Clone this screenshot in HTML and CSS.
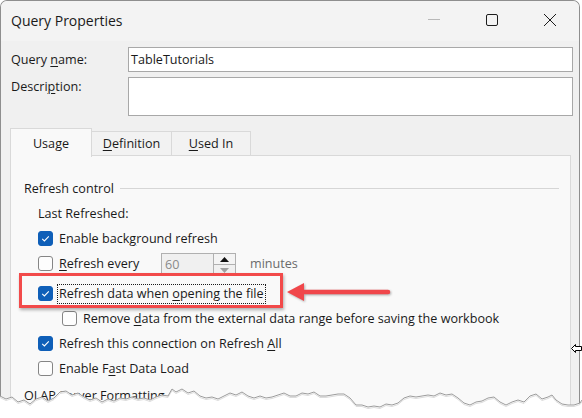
FILE: index.html
```html
<!DOCTYPE html>
<html>
<head>
<meta charset="utf-8">
<title>Query Properties</title>
<link rel="stylesheet" href="styles.css">
</head>
<body>
<div class="stage">
  <div class="window">
    <div class="titlebar">
      <span class="title">Query Properties</span>
      <div class="caption">
        <span class="cbtn"><svg width="14" height="14" viewBox="0 0 14 14"><path d="M1 6.5H13" stroke="#b8b8b8" stroke-width="1" fill="none"/></svg></span>
        <span class="cbtn"><svg width="14" height="14" viewBox="0 0 14 14"><rect x="1.5" y="1.5" width="11" height="11" rx="1.5" fill="none" stroke="#1c1c1c" stroke-width="1"/></svg></span>
        <span class="cbtn"><svg width="14" height="14" viewBox="0 0 14 14"><path d="M1 1L13 13M13 1L1 13" stroke="#1c1c1c" stroke-width="1" fill="none"/></svg></span>
      </div>
    </div>
    <div class="content">
      <div class="field name">
        <div class="label">Query <u>n</u>ame:</div>
        <div class="input">TableTutorials</div>
      </div>
      <div class="field desc">
        <div class="label">Descri<u>p</u>tion:</div>
        <div class="textarea"></div>
      </div>
      <div class="tabs">
        <div class="tab active">Usa<u>g</u>e</div>
        <div class="tab off def"><u>D</u>efinition</div>
        <div class="tab off used"><u>U</u>sed In</div>
      </div>
      <div class="panel">
        <div class="hdr"><span>Refresh control</span><span class="rule"></span></div>
        <div class="row last"><span>Last Refreshed:</span></div>
        <div class="row">
          <span class="cb on"><svg width="13" height="13" viewBox="0 0 13 13"><path d="M3.2 6.8L5.4 8.9L9.8 4.3" stroke="#fff" stroke-width="1.1" fill="none"/></svg></span>
          <span class="lbl">Enable back<u>g</u>round refresh</span>
        </div>
        <div class="row">
          <span class="cb"></span>
          <span class="lbl fixed"><u>R</u>efresh every</span>
          <div class="spinner">
            <span class="spin-val">60</span>
            <span class="spin-btns">
              <span class="sb up"><svg width="9" height="5" viewBox="0 0 9 5"><polygon points="0,5 4.5,0 9,5" fill="#111"/></svg></span>
              <span class="sb down"><svg width="9" height="5" viewBox="0 0 9 5"><polygon points="0,0 4.5,5 9,0" fill="#a0a0a0"/></svg></span>
            </span>
          </div>
          <span class="minutes">minutes</span>
        </div>
        <div class="row gapped">
          <span class="cb on"><svg width="13" height="13" viewBox="0 0 13 13"><path d="M3.2 6.8L5.4 8.9L9.8 4.3" stroke="#fff" stroke-width="1.1" fill="none"/></svg></span>
          <span class="lbl focus">Refresh data when <u>o</u>pening the file</span>
        </div>
        <div class="row sub">
          <span class="cb"></span>
          <span class="lbl wide">Remove <u>d</u>ata from the external data range before saving the workbook</span>
        </div>
        <div class="row">
          <span class="cb on"><svg width="13" height="13" viewBox="0 0 13 13"><path d="M3.2 6.8L5.4 8.9L9.8 4.3" stroke="#fff" stroke-width="1.1" fill="none"/></svg></span>
          <span class="lbl">Refresh this connection on Refresh <u>A</u>ll</span>
        </div>
        <div class="row">
          <span class="cb"></span>
          <span class="lbl">Enable F<u>a</u>st Data Load</span>
        </div>
        <div class="olap">OLAP Server Formatting</div>
      </div>
    </div>
  </div>

  <div class="callout"></div>
  <svg class="arrow" width="112" height="24" viewBox="0 0 112 24">
    <g fill="#f0474b">
      <polygon points="4,12 21,3 21,21"/>
      <path d="M19 12H105" stroke="#f0474b" stroke-width="4.5" stroke-linecap="round"/>
    </g>
  </svg>

  <svg class="cursor" width="11" height="11" viewBox="0 0 11 11">
    <path d="M0.5 5.5L4.5 1.5V3.5H10.5V7.5H4.5V9.5Z" fill="#fff" stroke="#000" stroke-width="1"/>
  </svg>

  <svg class="torn" width="582" height="418" viewBox="0 0 582 418">
    <polygon fill="#ffffff" points="0,396 6,399 12,397 18,402 24,400 30,404 36,399 42,397 48,401 54,398 60,392 66,391 72,395 78,393 84,397 90,400 96,398 102,402 108,399 114,401 120,398 126,399 132,397 138,399 144,398 150,400 156,397 162,395 168,396 172,389 176,392 182,389 188,393 194,391 200,396 206,398 212,397 218,399 224,396 230,393 236,395 242,392 248,396 254,398 260,396 266,398 272,397 278,395 284,393 290,396 296,396 302,393 308,394 314,392 320,396 326,396 332,395 338,394 344,394 350,398 356,405 362,405 368,407 374,406 380,407 386,404 392,405 398,403 404,398 410,396 416,397 422,396 428,395 434,396 440,393 446,395 452,394 458,398 464,403 470,405 476,402 482,401 488,398 494,397 500,402 506,405 512,402 518,400 524,402 530,396 536,394 542,399 548,397 552,395 556,400 562,404 568,405 574,405 580,403 582,400 582,418 0,418"/>
    <polyline fill="none" stroke="#dcdcdc" stroke-width="1" transform="translate(0,1.5)" points="0,396 6,399 12,397 18,402 24,400 30,404 36,399 42,397 48,401 54,398 60,392 66,391 72,395 78,393 84,397 90,400 96,398 102,402 108,399 114,401 120,398 126,399 132,397 138,399 144,398 150,400 156,397 162,395 168,396 172,389 176,392 182,389 188,393 194,391 200,396 206,398 212,397 218,399 224,396 230,393 236,395 242,392 248,396 254,398 260,396 266,398 272,397 278,395 284,393 290,396 296,396 302,393 308,394 314,392 320,396 326,396 332,395 338,394 344,394 350,398 356,405 362,405 368,407 374,406 380,407 386,404 392,405 398,403 404,398 410,396 416,397 422,396 428,395 434,396 440,393 446,395 452,394 458,398 464,403 470,405 476,402 482,401 488,398 494,397 500,402 506,405 512,402 518,400 524,402 530,396 536,394 542,399 548,397 552,395 556,400 562,404 568,405 574,405 580,403 582,400"/>
    <polyline fill="none" stroke="#9c9c9c" stroke-width="1" points="0,396 6,399 12,397 18,402 24,400 30,404 36,399 42,397 48,401 54,398 60,392 66,391 72,395 78,393 84,397 90,400 96,398 102,402 108,399 114,401 120,398 126,399 132,397 138,399 144,398 150,400 156,397 162,395 168,396 172,389 176,392 182,389 188,393 194,391 200,396 206,398 212,397 218,399 224,396 230,393 236,395 242,392 248,396 254,398 260,396 266,398 272,397 278,395 284,393 290,396 296,396 302,393 308,394 314,392 320,396 326,396 332,395 338,394 344,394 350,398 356,405 362,405 368,407 374,406 380,407 386,404 392,405 398,403 404,398 410,396 416,397 422,396 428,395 434,396 440,393 446,395 452,394 458,398 464,403 470,405 476,402 482,401 488,398 494,397 500,402 506,405 512,402 518,400 524,402 530,396 536,394 542,399 548,397 552,395 556,400 562,404 568,405 574,405 580,403 582,400"/>
  </svg>
</div>
</body>
</html>
```

FILE: styles.css
```css
body {
  margin: 0;
  background: #ffffff;
  font-family: "Open Sans", "Noto Sans", sans-serif;
  font-size: 12.6px;
  line-height: 16px;
  color: #1a1a1a;
}

u {
  text-underline-offset: 2px;
  text-decoration-thickness: 1px;
}

.stage {
  position: relative;
  width: 582px;
  height: 418px;
  overflow: hidden;
}

.window {
  width: 580px;
  height: 418px;
  box-sizing: border-box;
  border: 1px solid #8e8e8e;
  border-bottom: none;
  border-radius: 7px 7px 0 0;
  background: #f0f0f0;
  overflow: hidden;
}

.titlebar {
  height: 40px;
  display: flex;
  align-items: center;
  background: #f3f3f3;
}

.title {
  flex: 1;
  padding-left: 10px;
  font-size: 14px;
  color: #1a1a1a;
}

.caption {
  display: flex;
  align-self: flex-start;
}

.cbtn {
  width: 58px;
  height: 40px;
  box-sizing: border-box;
  padding-top: 12px;
  display: flex;
  justify-content: center;
  align-items: flex-start;
}

.content {
  padding: 0 6px 0 9px;
}

.field {
  display: flex;
}

.field.name {
  margin-top: 6px;
  height: 25px;
  align-items: center;
}

.label {
  width: 118px;
  padding-left: 1px;
  box-sizing: border-box;
}

.input {
  flex: 1;
  height: 25px;
  box-sizing: border-box;
  border: 1px solid #a8a8a8;
  background: #ffffff;
  padding-left: 2px;
  display: flex;
  align-items: center;
}

.field.desc {
  margin-top: 5px;
  height: 39px;
}

.field.desc .label {
  padding-top: 2px;
}

.textarea {
  flex: 1;
  box-sizing: border-box;
  border: 1px solid #a8a8a8;
  background: #ffffff;
}

.tabs {
  display: flex;
  height: 27px;
  margin-top: 12px;
  position: relative;
  z-index: 1;
}

.tab {
  box-sizing: border-box;
  text-align: center;
}

.tab.active {
  width: 82px;
  height: 29px;
  padding-top: 7px;
  background: #f9f9f9;
  border: 1px solid #d9d9d9;
  border-bottom: none;
}

.tab.off {
  margin-top: 3px;
  height: 24px;
  padding-top: 4px;
  background: #f2f2f2;
  border: 1px solid #d9d9d9;
  border-left: none;
  border-bottom: none;
}

.tab.def {
  width: 80px;
}

.tab.used {
  width: 79px;
}

.panel {
  height: 320px;
  margin-right: 2px;
  box-sizing: border-box;
  background: #f9f9f9;
  border: 1px solid #d9d9d9;
  padding: 20px 0 0 13px;
}

.hdr {
  height: 25px;
  display: flex;
  align-items: center;
  gap: 6px;
}

.hdr .rule {
  flex: 1;
  height: 1px;
  margin-right: 11px;
  background: #d6d6d6;
}

.row {
  height: 25px;
  display: flex;
  align-items: center;
  padding-left: 14px;
}

.row.last {
  height: 25px;
}

.row.gapped {
  margin-top: 5px;
}

.row.sub {
  padding-left: 38px;
}

.cb {
  flex: none;
  width: 15px;
  height: 15px;
  box-sizing: border-box;
  border: 1px solid #858585;
  border-radius: 3px;
  background: #fdfdfd;
  display: flex;
  align-items: center;
  justify-content: center;
}

.cb.on {
  background: #0f5fb8;
  border-color: #0f5fb8;
}

.lbl {
  margin-left: 4px;
  padding: 1px;
  border: 1px dotted transparent;
  white-space: nowrap;
}

.lbl.focus {
  border-color: #1a1a1a;
}

.lbl.fixed {
  width: 104px;
  box-sizing: border-box;
}

.spinner {
  align-self: flex-end;
  width: 75px;
  height: 23px;
  box-sizing: border-box;
  border: 1px solid #b0b0b0;
  background: #f0f0f0;
  display: flex;
}

.spin-val {
  flex: 1;
  padding-left: 3px;
  color: #8a8a8a;
  display: flex;
  align-items: center;
}

.spin-btns {
  width: 22px;
  display: flex;
  flex-direction: column;
}

.sb {
  flex: 1;
  display: flex;
  align-items: center;
  justify-content: center;
  box-sizing: border-box;
  border-left: 1px solid #b0b0b0;
  background: #f0f0f0;
}

.sb.up {
  border-bottom: 1px solid #b0b0b0;
  background: #f4f4f4;
}

.minutes {
  margin-left: 14px;
  color: #6b6b6b;
}

.olap {
  margin-top: 2px;
  height: 25px;
  display: flex;
  align-items: center;
}

.callout {
  position: absolute;
  left: 19px;
  top: 273px;
  width: 264px;
  height: 35px;
  box-sizing: border-box;
  border: 3px solid #f24a4a;
  box-shadow: 1px 2px 3px rgba(0, 0, 0, 0.3);
}

.arrow {
  position: absolute;
  left: 283px;
  top: 280px;
  filter: drop-shadow(1px 1px 1px rgba(0, 0, 0, 0.3));
}

.cursor {
  position: absolute;
  left: 571px;
  top: 343px;
}

.torn {
  position: absolute;
  left: 0;
  top: 0;
  pointer-events: none;
}
```
